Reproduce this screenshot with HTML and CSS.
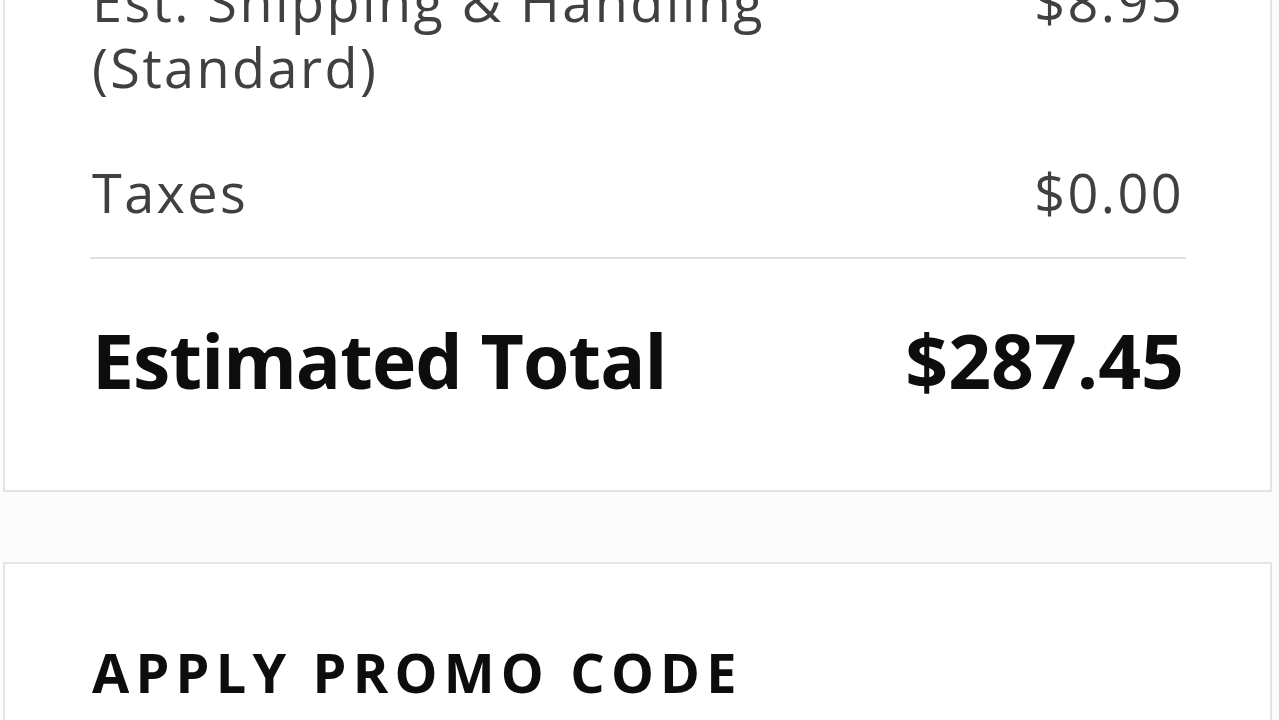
FILE: index.html
```html
<!DOCTYPE html>
<html lang="en">
<head>
    <meta charset="UTF-8">
    <meta name="viewport" content="width=device-width, initial-scale=1.0">
    <title>Order Summary</title>
    <link rel="stylesheet" href="styles.css">
</head>
<body>
    <div class="checkout">
        <section class="card summary">
            <div class="line-item">
                <span class="label">Est. Shipping &amp; Handling (Standard)</span>
                <span class="value">$8.95</span>
            </div>
            <div class="line-item">
                <span class="label">Taxes</span>
                <span class="value">$0.00</span>
            </div>
            <hr class="divider">
            <div class="total">
                <span>Estimated Total</span>
                <span>$287.45</span>
            </div>
        </section>

        <section class="card promo">
            <h2>Apply Promo Code</h2>
        </section>
    </div>
</body>
</html>
```

FILE: styles.css
```css
body {
    font-family: "Open Sans", Arial, sans-serif;
    margin: 0;
    padding: 0;
    background-color: #fcfcfc;
    color: #404040;
    overflow: hidden;
}
.checkout {
    padding: 0 7px 0 3px;
}
.card {
    background-color: #fff;
    border: 2px solid #e4e4e4;
    padding: 0 86px 0 87px;
}
.summary {
    margin-top: -120px;
    padding-top: 86px;
    padding-bottom: 85px;
}
.line-item {
    display: flex;
    justify-content: space-between;
    align-items: flex-start;
    font-size: 54px;
    line-height: 66px;
    letter-spacing: 0.045em;
}
.line-item + .line-item {
    margin-top: 59px;
}
.line-item .label {
    max-width: 760px;
}
.divider {
    border: none;
    border-top: 2px solid #e0e0e0;
    margin: 32px -2px 56px;
}
.total {
    display: flex;
    justify-content: space-between;
    font-size: 75px;
    line-height: 90px;
    font-weight: 700;
    color: #0d0d0d;
}
.total span:first-child {
    letter-spacing: -0.012em;
}
.promo {
    margin-top: 70px;
    padding-top: 75px;
    padding-bottom: 40px;
}
.promo h2 {
    margin: 0;
    font-size: 54px;
    line-height: 66px;
    font-weight: 700;
    text-transform: uppercase;
    letter-spacing: 0.115em;
    color: #0d0d0d;
}
```
